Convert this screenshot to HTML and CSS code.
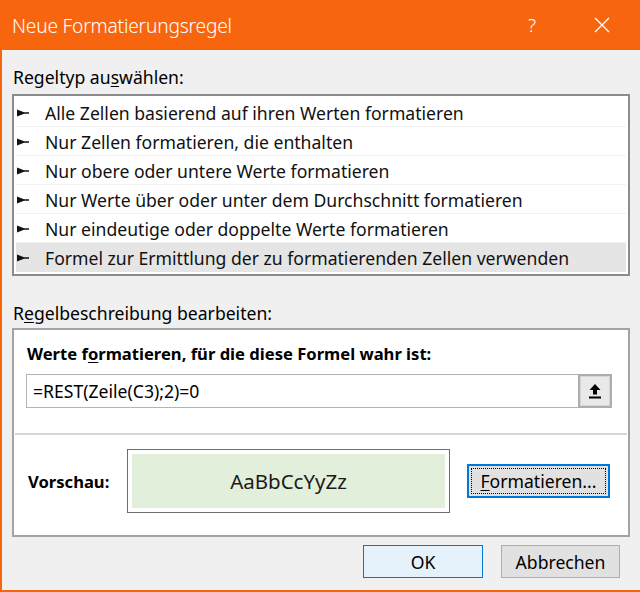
FILE: index.html
```html
<!DOCTYPE html>
<html lang="de">
<head>
<meta charset="utf-8">
<title>Neue Formatierungsregel</title>
<link rel="stylesheet" href="styles.css">
</head>
<body>
<div class="window">
  <div class="titlebar">
    <span class="title">Neue Formatierungsregel</span>
    <span class="help">?</span>
    <span class="close">
      <svg width="16" height="16" viewBox="0 0 16 16"><path d="M1 1 L15 15 M15 1 L1 15" stroke="#fff" stroke-width="1.3" fill="none"/></svg>
    </span>
  </div>
  <div class="content">
    <div class="label first">Regeltyp au<u>s</u>wählen:</div>
    <div class="listbox">
      <div class="item"><svg class="arr" width="13" height="10" viewBox="0 0 13 10"><path d="M0 1.5 L0 8.5 L7 5.8 L12 5.8 L12 4.2 L7 4.2 Z" fill="#111"/></svg>Alle Zellen basierend auf ihren Werten formatieren</div>
      <div class="item"><svg class="arr" width="13" height="10" viewBox="0 0 13 10"><path d="M0 1.5 L0 8.5 L7 5.8 L12 5.8 L12 4.2 L7 4.2 Z" fill="#111"/></svg>Nur Zellen formatieren, die enthalten</div>
      <div class="item"><svg class="arr" width="13" height="10" viewBox="0 0 13 10"><path d="M0 1.5 L0 8.5 L7 5.8 L12 5.8 L12 4.2 L7 4.2 Z" fill="#111"/></svg>Nur obere oder untere Werte formatieren</div>
      <div class="item"><svg class="arr" width="13" height="10" viewBox="0 0 13 10"><path d="M0 1.5 L0 8.5 L7 5.8 L12 5.8 L12 4.2 L7 4.2 Z" fill="#111"/></svg>Nur Werte über oder unter dem Durchschnitt formatieren</div>
      <div class="item"><svg class="arr" width="13" height="10" viewBox="0 0 13 10"><path d="M0 1.5 L0 8.5 L7 5.8 L12 5.8 L12 4.2 L7 4.2 Z" fill="#111"/></svg>Nur eindeutige oder doppelte Werte formatieren</div>
      <div class="item selected"><svg class="arr" width="13" height="10" viewBox="0 0 13 10"><path d="M0 1.5 L0 8.5 L7 5.8 L12 5.8 L12 4.2 L7 4.2 Z" fill="#111"/></svg>Formel zur Ermittlung der zu formatierenden Zellen verwenden</div>
    </div>
    <div class="label second">R<u>e</u>gelbeschreibung bearbeiten:</div>
    <div class="descbox">
      <div class="upper">
        <div class="heading">Werte f<u>o</u>rmatieren, für die diese Formel wahr ist:</div>
        <div class="inputrow">
          <div class="input">=REST(Zeile(C3);2)=0</div>
          <div class="pick">
            <svg width="14" height="16" viewBox="0 0 14 16"><path d="M7 1 L1.5 7 L5 7 L5 11.5 L9 11.5 L9 7 L12.5 7 Z" fill="#000"/><rect x="1" y="13.5" width="12" height="2" fill="#000"/></svg>
          </div>
        </div>
      </div>
      <div class="lower">
        <div class="vlabel">Vorschau:</div>
        <div class="preview"><div class="sample">AaBbCcYyZz</div></div>
        <div class="fmtbtn"><span class="focus"><u>F</u>ormatieren...</span></div>
      </div>
    </div>
    <div class="buttons">
      <div class="btn ok">OK</div>
      <div class="btn">Abbrechen</div>
    </div>
  </div>
</div>
</body>
</html>
```

FILE: styles.css
```css
html, body {
  margin: 0;
  padding: 0;
  background: #f0f0f0;
}
body {
  width: 640px;
  height: 592px;
  overflow: hidden;
  font-family: "Noto Sans", "Open Sans", sans-serif;
  color: #000;
}
.window {
  width: 640px;
  height: 592px;
  box-sizing: border-box;
  border-left: 2px solid #f7660f;
  border-bottom: 2px solid #f7660f;
  background: #f0f0f0;
}
.titlebar {
  height: 50px;
  margin-left: -2px;
  background: #f7660f;
  display: flex;
  align-items: center;
  color: #fff;
}
.title {
  margin-left: 12px;
  font-size: 19.2px;
  font-weight: 300;
  flex: 1;
  letter-spacing: -0.2px;
}
.help {
  font-size: 19px;
  font-weight: 300;
  margin-right: 58px;
}
.close {
  display: flex;
  margin-right: 30px;
}
.content {
  padding: 0 10px 0 10px;
}
.label {
  font-size: 17.6px;
  line-height: 20px;
  margin-left: 1px;
}
.label u {
  text-underline-offset: 2px;
}
.label.first {
  padding-top: 17px;
  height: 27px;
}
.listbox {
  height: 182px;
  box-sizing: border-box;
  border: 2px solid #8c8c8c;
  background: #fff;
  padding: 2px;
}
.item {
  height: 29px;
  box-sizing: border-box;
  border-bottom: 1px solid #f2f2f2;
  display: flex;
  align-items: center;
  font-size: 17.6px;
  color: #111;
  padding-left: 1px;
  padding-top: 1px;
}
.item.selected {
  background: #e5e5e5;
  border-bottom: none;
}
.arr {
  margin-right: 15px;
  flex: none;
}
.label.second {
  padding-top: 27px;
  height: 25px;
}
.descbox {
  height: 209px;
  box-sizing: border-box;
  border: 2px solid #a3a3a3;
  background: #fff;
  display: flex;
  flex-direction: column;
}
.upper {
  height: 105px;
  box-sizing: border-box;
  border-bottom: 2px solid #d7d7d7;
  margin: 0 1px;
  padding: 14px 15px 0 11px;
}
.heading {
  font-size: 16.6px;
  font-weight: bold;
  line-height: 20px;
  margin-left: 1px;
}
.heading u {
  text-underline-offset: 2px;
}
.inputrow {
  margin-top: 10px;
  display: flex;
  height: 34px;
}
.input {
  flex: 1;
  box-sizing: border-box;
  border: 1px solid #b4b4b4;
  border-right: none;
  font-size: 17.6px;
  display: flex;
  align-items: center;
  padding-left: 6px;
}
.pick {
  width: 34px;
  box-sizing: border-box;
  border: 2px solid #adadad;
  background: #e9e9e9;
  box-shadow: inset 0 0 0 1px #d6d6d6;
  display: flex;
  align-items: center;
  justify-content: center;
}
.lower {
  flex: 1;
  display: flex;
  align-items: center;
  padding: 0 0 8px 14px;
}
.vlabel {
  font-size: 16.6px;
  font-weight: bold;
  width: 99px;
}
.preview {
  width: 323px;
  height: 64px;
  box-sizing: border-box;
  border: 1px solid #6e6e6e;
  background: #fff;
  padding: 4px;
}
.sample {
  height: 100%;
  background: #e2efda;
  display: flex;
  align-items: center;
  justify-content: center;
  font-size: 20.5px;
  color: #1a1a1a;
}
.fmtbtn {
  margin-left: 17px;
  width: 143px;
  height: 34px;
  box-sizing: border-box;
  border: 2px solid #0078d7;
  background: #e1e1e1;
  padding: 2px;
  display: flex;
}
.focus {
  flex: 1;
  border: 1px dotted #000;
  display: flex;
  align-items: center;
  justify-content: center;
  font-size: 17.6px;
}
.focus u {
  text-underline-offset: 2px;
}
.buttons {
  display: flex;
  justify-content: flex-end;
  gap: 18px;
  margin-top: 8px;
  padding-right: 10px;
}
.btn {
  width: 119px;
  height: 33px;
  box-sizing: border-box;
  border: 1px solid #adadad;
  background: #e1e1e1;
  display: flex;
  align-items: center;
  justify-content: center;
  font-size: 17.6px;
}
.btn.ok {
  width: 120px;
  border: 1px solid #0078d7;
  background: #e5f1fb;
}
```
